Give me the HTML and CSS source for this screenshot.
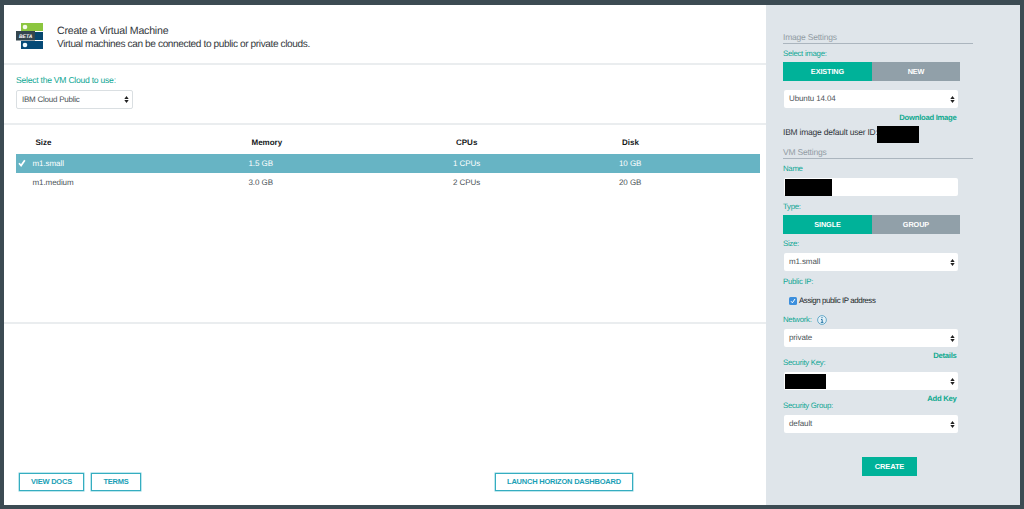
FILE: index.html
```html
<!DOCTYPE html>
<html lang="en">
<head>
<meta charset="utf-8">
<title>Create a Virtual Machine</title>
<link rel="stylesheet" href="styles.css">
</head>
<body>
<div class="window">
  <main class="main">
    <header class="header">
      <svg class="logo" width="28" height="28" viewBox="0 0 28 28">
        <rect x="5" y="1" width="22" height="8" fill="#8cc63f"/>
        <rect x="5" y="10" width="22" height="8" fill="#06476f"/>
        <rect x="5" y="19" width="22" height="8" fill="#064a77"/>
        <circle cx="9" cy="5" r="2.3" fill="#f4faea"/>
        <circle cx="9" cy="23" r="2.3" fill="#eefafd"/>
        <rect x="0" y="9" width="19" height="9.5" fill="#34464e"/>
        <text class="beta" x="3" y="15.5">BETA</text>
      </svg>
      <div class="intro">
        <h1 class="title">Create a Virtual Machine</h1>
        <p class="subtitle">Virtual machines can be connected to public or private clouds.</p>
      </div>
    </header>
    <section class="cloud">
      <div class="cloud-label">Select the VM Cloud to use:</div>
      <div class="select cloud-select"><span>IBM Cloud Public</span><svg class="arrows" width="5" height="7" viewBox="0 0 5 7"><path d="M2.5 0 4.7 3H.3zM2.5 7 .3 4h4.4z"/></svg></div>
    </section>
    <section class="sizes">
      <div class="row head"><span>Size</span><span>Memory</span><span>CPUs</span><span>Disk</span></div>
      <div class="row selected"><svg class="tick" width="8" height="8" viewBox="0 0 8 8"><path d="M1 4.2 3.1 6.6 6.8 1.2"/></svg><span>m1.small</span><span>1.5 GB</span><span>1 CPUs</span><span>10 GB</span></div>
      <div class="row"><span>m1.medium</span><span>3.0 GB</span><span>2 CPUs</span><span>20 GB</span></div>
    </section>
    <footer class="footer">
      <button class="outline docs">VIEW DOCS</button>
      <button class="outline terms">TERMS</button>
      <button class="outline horizon">LAUNCH HORIZON DASHBOARD</button>
    </footer>
  </main>
  <aside class="side">
    <h2 class="group-title">Image Settings</h2>
    <div class="label select-image">Select image:</div>
    <div class="toggle"><span class="on">EXISTING</span><span>NEW</span></div>
    <div class="select image-select"><span>Ubuntu 14.04</span><svg class="arrows" width="5" height="7" viewBox="0 0 5 7"><path d="M2.5 0 4.7 3H.3zM2.5 7 .3 4h4.4z"/></svg></div>
    <div class="link download">Download Image</div>
    <div class="user-id"><span>IBM image default user ID:</span><i class="redacted"></i></div>
    <h2 class="group-title vm">VM Settings</h2>
    <div class="label name-label">Name</div>
    <div class="select name-input"><i class="redacted"></i></div>
    <div class="label type-label">Type:</div>
    <div class="toggle"><span class="on">SINGLE</span><span>GROUP</span></div>
    <div class="label size-label">Size:</div>
    <div class="select"><span>m1.small</span><svg class="arrows" width="5" height="7" viewBox="0 0 5 7"><path d="M2.5 0 4.7 3H.3zM2.5 7 .3 4h4.4z"/></svg></div>
    <div class="label ip-label">Public IP:</div>
    <div class="check"><svg width="8" height="8" viewBox="0 0 8 8"><rect width="8" height="8" rx="1.5" fill="#3c8fdd"/><path d="M2 4.2 3.4 5.8 6 2" fill="none" stroke="#fff"/></svg><span>Assign public IP address</span></div>
    <div class="label network-label"><span>Network:</span><svg width="10" height="10" viewBox="0 0 10 10"><circle cx="5" cy="5" r="4.4" fill="#e2f0f7" stroke="#4a9bc0" stroke-width=".8"/><path d="M4 4.5h1.2v2.8M3.8 7.4h2.6M5 2v1.2" fill="none" stroke="#2b78a8"/></svg></div>
    <div class="select"><span>private</span><svg class="arrows" width="5" height="7" viewBox="0 0 5 7"><path d="M2.5 0 4.7 3H.3zM2.5 7 .3 4h4.4z"/></svg></div>
    <div class="pair"><span class="label key">Security Key:</span><span class="link">Details</span></div>
    <div class="select key-select"><i class="redacted"></i><svg class="arrows" width="5" height="7" viewBox="0 0 5 7"><path d="M2.5 0 4.7 3H.3zM2.5 7 .3 4h4.4z"/></svg></div>
    <div class="pair"><span class="label secgroup">Security Group:</span><span class="link">Add Key</span></div>
    <div class="select"><span>default</span><svg class="arrows" width="5" height="7" viewBox="0 0 5 7"><path d="M2.5 0 4.7 3H.3zM2.5 7 .3 4h4.4z"/></svg></div>
    <button class="create">CREATE</button>
  </aside>
</div>
</body>
</html>
```
FILE: styles.css
```css
* { box-sizing: border-box; }
body {
  margin: 0;
  padding: 5px 4px 4px;
  height: 509px;
  background: #3c4b53;
  font: 8px/12px "Liberation Sans", Arial, sans-serif;
  color: #4b5358;
  white-space: nowrap;
  overflow: hidden;
  text-rendering: geometricPrecision;
}
h1, h2, p { margin: 0; font-weight: 400; }
button { margin: 0; padding: 0; border: 0; font: bold 7.5px/1 "Liberation Sans", Arial, sans-serif; }
.window { display: flex; height: 500px; }
.main { width: 762px; display: flex; flex-direction: column; background: #fff; }

.header { display: flex; height: 60px; padding: 17px 0 0 12px; border-bottom: 2px solid #eaedef; }
.logo { flex: none; }
.beta { font: italic bold 5px "Liberation Sans", Arial, sans-serif; fill: #fff; }
.intro { padding: 2px 0 0 13px; color: #33383c; }
.title { font-size: 10.6px; line-height: 14px; letter-spacing: -.21px; }
.subtitle { font-size: 10.1px; line-height: 14px; letter-spacing: -.39px; }

.cloud { height: 60px; padding: 9px 0 0 12px; border-bottom: 2px solid #eaedef; }
.cloud-label { color: #10a795; font-size: 8.6px; letter-spacing: -.25px; }
.select {
  display: flex;
  align-items: center;
  justify-content: space-between;
  width: 174px;
  height: 18px;
  margin-left: 1px;
  padding: 0 3px 0 5px;
  background: #fff;
  border-radius: 2px;
  letter-spacing: -.12px;
}
.arrows { flex: none; margin-left: auto; fill: #222; }
.cloud-select { width: 117px; height: 19px; margin: 4px 0 0; border: 1px solid #dadfe2; letter-spacing: -.24px; }

.sizes { height: 199px; padding: 10px 6px 0 12px; border-bottom: 2px solid #eaedef; }
.row {
  display: grid;
  grid-template-columns: 216px 204.5px 166px 1fr;
  position: relative;
  height: 19px;
  line-height: 19px;
  padding-left: 16.5px;
  letter-spacing: -.08px;
}
.head { line-height: 16px; padding-left: 19.5px; font-weight: 700; color: #16191b; letter-spacing: 0; }
.selected { background: #67b4c4; color: #fff; }
.tick { position: absolute; left: 2px; top: 5px; fill: none; stroke: #fff; stroke-width: 1.7; }

.footer { display: flex; margin-top: 149px; padding-left: 15px; }
.outline { height: 18px; background: #fff; border: 1px solid #35adc0; box-shadow: 0 0 0 .5px #7fcfdb; color: #1a9fb6; letter-spacing: -.22px; }
.docs { width: 65px; }
.terms { width: 50px; margin-left: 7px; }
.horizon { width: 138px; margin-left: 354px; }

.side { width: 254px; padding: 26px 0 0 17px; background: #dfe5ea; }
.group-title { width: 190px; height: 13px; border-bottom: 1px solid #abb5be; color: #929ca4; font-size: 8.5px; line-height: 13px; letter-spacing: -.21px; }
.label { height: 12px; color: #10a795; font-size: 7.8px; letter-spacing: -.28px; }
.select-image { margin: 4px 0 2px; }
.toggle { display: grid; grid-template-columns: 89px 88px; width: 177px; height: 19px; }
.toggle span { background: #91a0a9; color: #fff; font-weight: 700; font-size: 7.3px; line-height: 19px; text-align: center; letter-spacing: -.1px; }
.toggle .on { background: #00b299; }
.image-select { margin-top: 9px; }
.link { color: #10a98f; font-weight: 700; font-size: 7.7px; letter-spacing: -.28px; }
.download { width: 173.5px; margin-top: 4px; text-align: right; }
.user-id { display: flex; height: 17px; margin-top: 2px; color: #30363b; font-size: 8.5px; letter-spacing: -.23px; }
.redacted { background: #000; flex: none; }
.user-id .redacted { width: 42px; height: 17px; }
.user-id span { width: 94px; }
.vm { margin-top: 3px; }
.name-label { margin: 4px 0 3px; }
.name-input { padding-left: 0; }
.name-input .redacted { width: 47px; height: 17px; margin-left: 1px; }
.type-label { margin: 5px 0 2px; }
.size-label { margin: 4px 0 3px; }
.ip-label { margin-top: 5px; }
.check { display: flex; align-items: center; gap: 2px; height: 12px; margin: 7px 0 0 6px; color: #22272a; font-size: 7.9px; letter-spacing: -.41px; }
.network-label { display: flex; align-items: center; gap: 5px; margin: 7px 0 3px; }
.network-label span { width: 29px; }
.pair { display: flex; justify-content: space-between; width: 173.5px; height: 19px; margin: 3px 0; }
.pair .label { align-self: flex-end; }
.key-select { padding-left: 0; }
.key-select .redacted { width: 41px; height: 15px; margin-left: 1px; }
.create { display: block; width: 55px; height: 19px; margin: 24px 0 0 79px; background: #00b299; color: #fff; letter-spacing: -.15px; }
```
